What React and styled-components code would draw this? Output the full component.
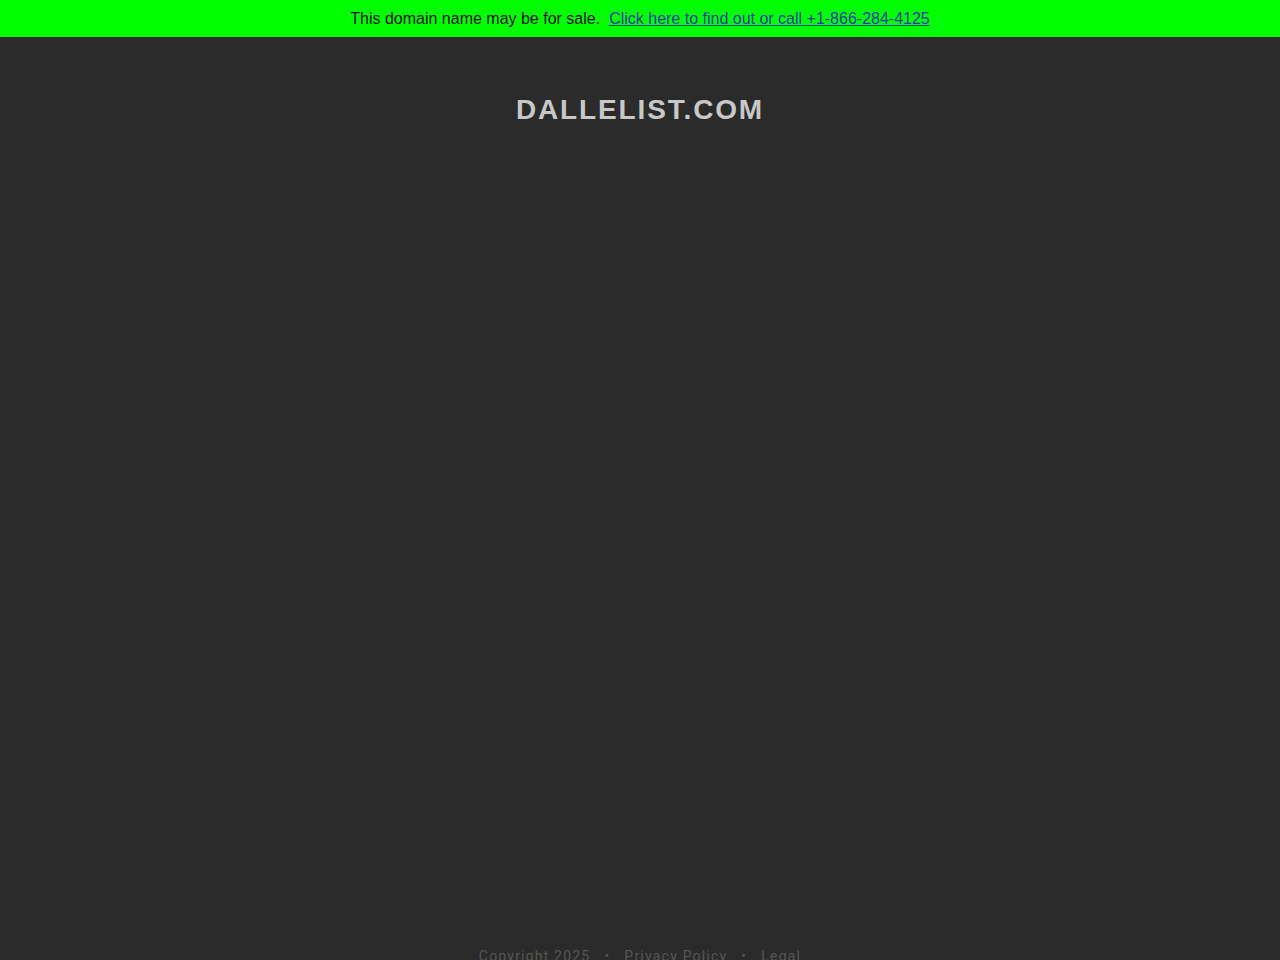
import React from 'react'
import styled, { createGlobalStyle } from 'styled-components'

const Global = createGlobalStyle`
  html, body {
    margin: 0;
    padding: 0;
    background: #2b2b2b;
  }
`

const Page = styled.div`
  display: flex;
  flex-direction: column;
  min-height: 100vh;
  background: #2b2b2b;
  font-family: "Liberation Sans", Arial, sans-serif;
`

const Banner = styled.div`
  height: 37px;
  display: flex;
  justify-content: center;
  align-items: center;
  background: #00ff00;
  color: #111;
  font-size: 16px;
`

const BannerLink = styled.a`
  margin-left: 9px;
  color: #1e3fa0;
  text-decoration: underline;
  cursor: pointer;
`

const Main = styled.main`
  flex: 1;
  display: flex;
  flex-direction: column;
  align-items: center;
`

const Title = styled.h1`
  margin: 57px 0 0;
  font-size: 28px;
  font-weight: 700;
  letter-spacing: 1.85px;
  color: #c8c8c8;
`

const Footer = styled.footer`
  display: flex;
  justify-content: center;
  align-items: center;
  gap: 14px;
  height: 40px;
  margin-top: auto;
  margin-bottom: -16px;
  font-family: Roboto, "Liberation Sans", sans-serif;
  font-size: 14px;
  letter-spacing: 1.2px;
  color: #555;
`

const FooterLink = styled.a`
  color: inherit;
  text-decoration: none;
`

const Dot = styled.span`
  font-size: 14px;
`

export default function App() {
  return (
    <Page>
      <Global />
      <Banner>
        This domain name may be for sale.
        <BannerLink>Click here to find out or call +1-866-284-4125</BannerLink>
      </Banner>
      <Main>
        <Title>DALLELIST.COM</Title>
      </Main>
      <Footer>
        <span>Copyright 2025</span>
        <Dot>•</Dot>
        <FooterLink>Privacy Policy</FooterLink>
        <Dot>•</Dot>
        <FooterLink>Legal</FooterLink>
      </Footer>
    </Page>
  )
}
